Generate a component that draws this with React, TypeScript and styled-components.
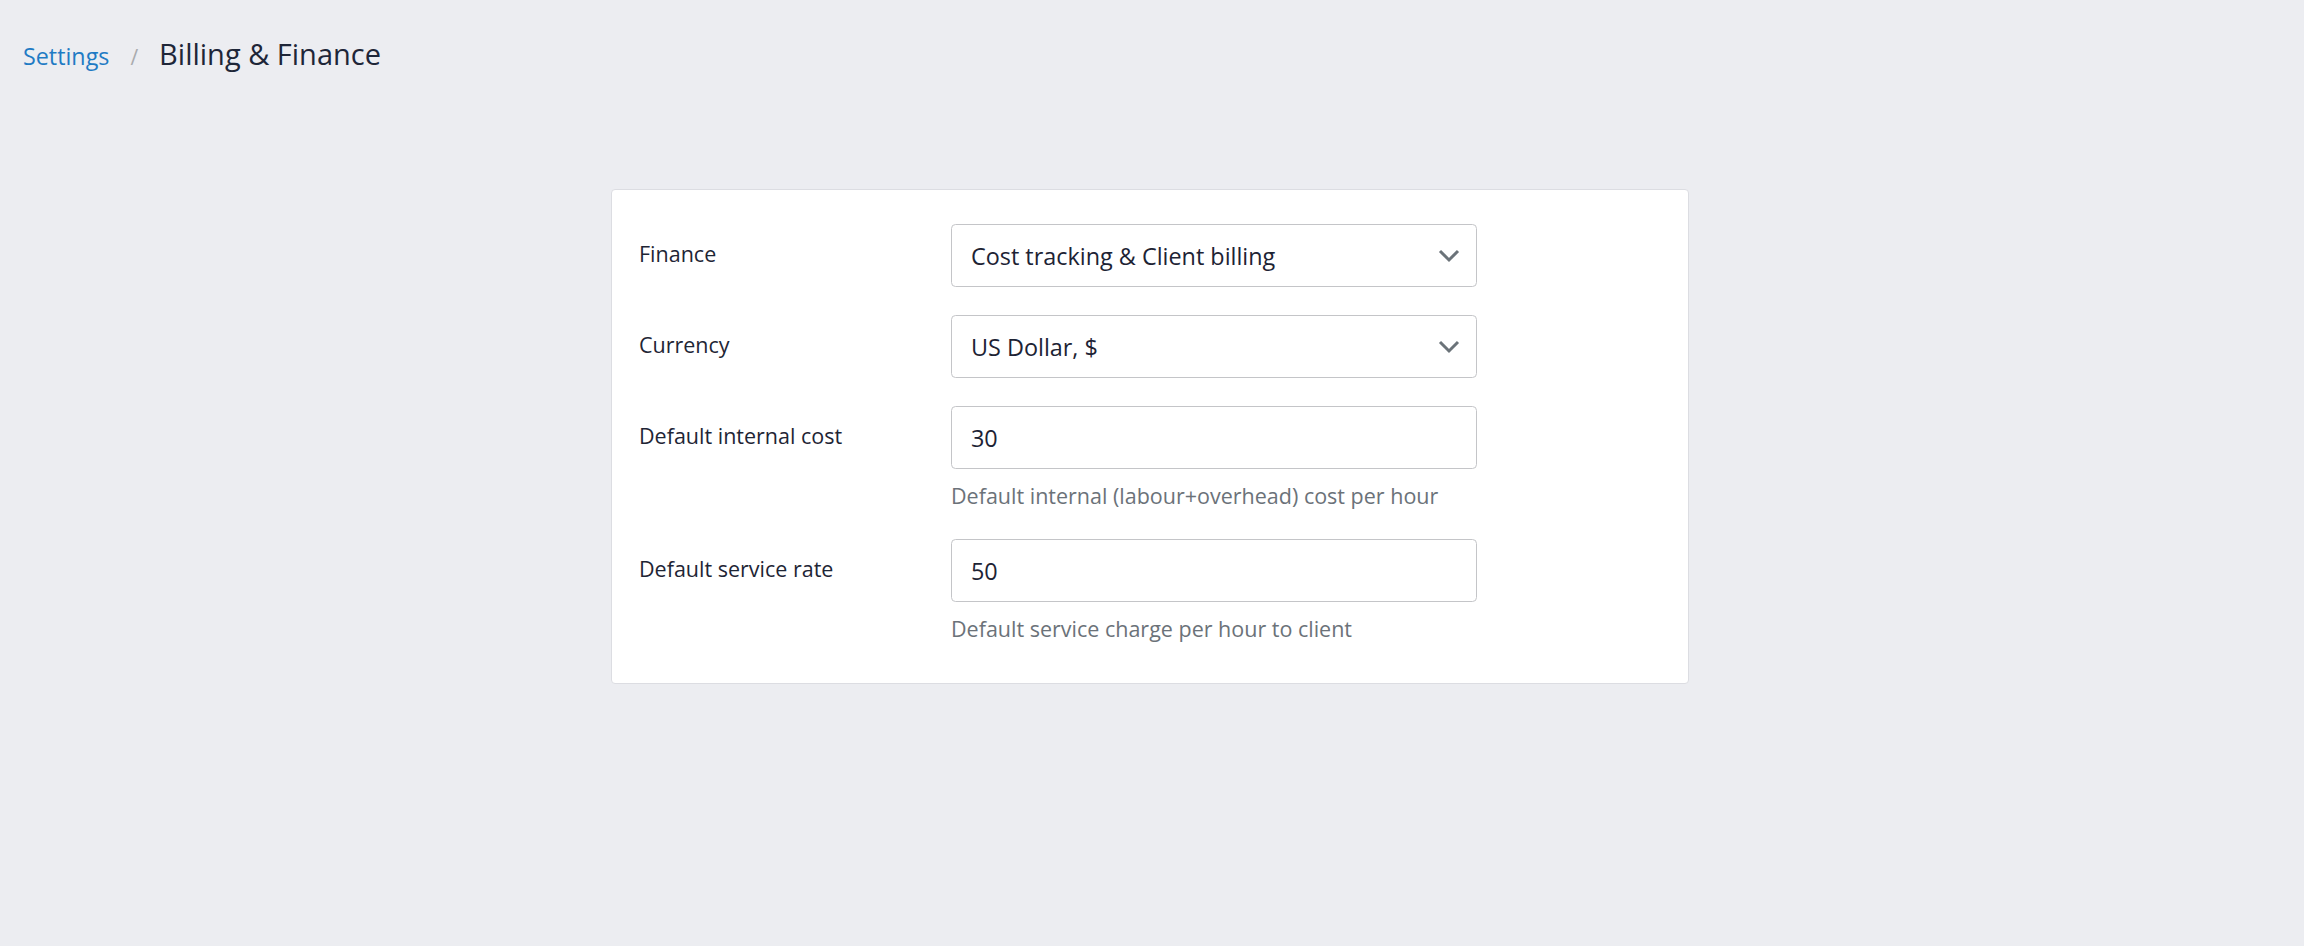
import React from 'react'
import styled, { createGlobalStyle } from 'styled-components'

const GlobalStyle = createGlobalStyle`
  html, body {
    margin: 0;
    padding: 0;
    background: #ecedf1;
    font-family: 'Open Sans', 'Noto Sans', sans-serif;
    color: #1e2535;
  }
  * {
    box-sizing: border-box;
  }
`

const Page = styled.div`
  min-height: 946px;
  padding: 36px 27px 0 23px;
`

const Breadcrumb = styled.nav`
  display: flex;
  align-items: baseline;
  height: 36px;
  line-height: 36px;
`

const CrumbLink = styled.a`
  font-size: 23.3px;
  color: #1f7bc4;
  text-decoration: none;
`

const CrumbDivider = styled.span`
  font-size: 21px;
  color: #a9abae;
  margin: 0 21px 0 21px;
`

const CrumbTitle = styled.h1`
  margin: 0;
  font-size: 29px;
  font-weight: 400;
  color: #1e2638;
`

const Card = styled.section`
  width: 1078px;
  margin: 117px auto 0 auto;
  background: #ffffff;
  border: 1px solid #dcdde2;
  border-radius: 4px;
  padding: 34px 28px 39px 27px;
  display: flex;
  flex-direction: column;
  gap: 28px;
`

const Row = styled.div`
  display: grid;
  grid-template-columns: 312px 526px;
  align-items: start;
`

const Label = styled.label`
  font-size: 21.5px;
  line-height: 30px;
  padding-top: 15px;
  color: #1e2535;
`

const Field = styled.div`
  display: flex;
  flex-direction: column;
`

const SelectWrap = styled.div`
  position: relative;
`

const fieldBox = `
  width: 100%;
  height: 63px;
  border: 1.5px solid #c4c5c8;
  border-radius: 4.5px;
  background: #ffffff;
  padding: 0 19px;
  font-family: 'Open Sans', 'Noto Sans', sans-serif;
  font-size: 23.4px;
  color: #1d2334;
  outline: none;
`

const Select = styled.select`
  ${fieldBox}
  appearance: none;
  -webkit-appearance: none;
  padding-right: 60px;
`

const Chevron = styled.svg`
  position: absolute;
  right: 17px;
  top: 50%;
  width: 22px;
  height: 14px;
  margin-top: -7px;
  pointer-events: none;
`

const Input = styled.input`
  ${fieldBox}
`

const Help = styled.div`
  margin-top: 12px;
  font-size: 21.5px;
  line-height: 30px;
  color: #6b7279;
`

type SelectFieldProps = { value: string; options: string[] }

function SelectField({ value, options }: SelectFieldProps) {
  return (
    <SelectWrap>
      <Select defaultValue={value}>
        {options.map(o => (
          <option key={o} value={o}>
            {o}
          </option>
        ))}
      </Select>
      <Chevron viewBox="0 0 22 14">
        <polyline points="2,2 11,11 20,2" fill="none" stroke="#6b7379" strokeWidth="3" />
      </Chevron>
    </SelectWrap>
  )
}

export default function App() {
  return (
    <Page>
      <GlobalStyle />
      <Breadcrumb>
        <CrumbLink href="#">Settings</CrumbLink>
        <CrumbDivider>/</CrumbDivider>
        <CrumbTitle>Billing &amp; Finance</CrumbTitle>
      </Breadcrumb>

      <Card>
        <Row>
          <Label>Finance</Label>
          <Field>
            <SelectField
              value="Cost tracking & Client billing"
              options={['Cost tracking & Client billing', 'Cost tracking only', 'Disabled']}
            />
          </Field>
        </Row>
        <Row>
          <Label>Currency</Label>
          <Field>
            <SelectField value="US Dollar, $" options={['US Dollar, $', 'Euro, €', 'British Pound, £']} />
          </Field>
        </Row>
        <Row>
          <Label>Default internal cost</Label>
          <Field>
            <Input defaultValue="30" />
            <Help>Default internal (labour+overhead) cost per hour</Help>
          </Field>
        </Row>
        <Row>
          <Label>Default service rate</Label>
          <Field>
            <Input defaultValue="50" />
            <Help>Default service charge per hour to client</Help>
          </Field>
        </Row>
      </Card>
    </Page>
  )
}
